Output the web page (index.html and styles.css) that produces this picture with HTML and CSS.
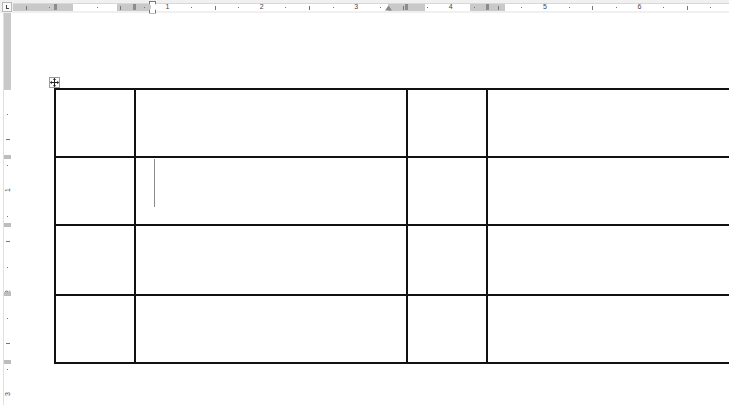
FILE: index.html
```html
<!DOCTYPE html>
<html lang="en">
  <head>
    <meta charset="UTF-8" />
    <meta name="viewport" content="width=device-width, initial-scale=1.0" />
    <title>Document</title>
    <link rel="stylesheet" href="styles.css">
  </head>
  <body>
    <!-- Horizontal ruler -->
    <div class="topbar">
      <div class="tab-selector"><span class="tab-l"></span></div>
      <div class="hruler" id="hruler">
        <div class="seg gray m-left"><span class="mark"></span></div>
        <div class="seg w-1"></div>
        <div class="seg gray g-1"><span class="mark"></span></div>
        <div class="seg w-2"></div>
        <div class="seg gray g-2"><span class="mark"></span></div>
        <div class="seg w-3"></div>
        <div class="seg gray g-3"><span class="mark"></span></div>
        <div class="seg w-4"></div>
        <div class="indent-marker"></div>
        <div class="tri-marker"></div>
      </div>
    </div>

    <div class="main">
      <!-- Vertical ruler -->
      <div class="vruler" id="vruler">
        <div class="vseg gray m-top"></div>
        <div class="vseg rest"></div>
      </div>

      <!-- Page -->
      <div class="page">
        <div class="table-wrap">
          <div class="move-handle">
            <svg width="9" height="9" viewBox="0 0 9 9">
              <path d="M4.5 0.5v8M0.5 4.5h8" stroke="#222" stroke-width="1" fill="none" />
              <path d="M4.5 0 L2.8 1.8 H6.2 Z M4.5 9 L2.8 7.2 H6.2 Z M0 4.5 L1.8 2.8 V6.2 Z M9 4.5 L7.2 2.8 V6.2 Z" fill="#222" />
            </svg>
          </div>
          <table class="doc-table">
            <colgroup>
              <col class="c1" /><col class="c2" /><col class="c3" /><col class="c4" />
            </colgroup>
            <tr class="r1"><td></td><td></td><td></td><td></td></tr>
            <tr class="r2"><td></td><td><span class="caret"></span></td><td></td><td></td></tr>
            <tr class="r3"><td></td><td></td><td></td><td></td></tr>
            <tr class="r4"><td></td><td></td><td></td><td></td></tr>
          </table>
        </div>
      </div>
    </div>

    <script>
      // horizontal ruler ticks, zero at the left margin
      const hruler = document.getElementById("hruler");
      const hZero = 60;
      const hStep = 23.6;
      for (let k = -2; k <= 27; k++) {
        if (k === 0) continue;
        const x = hZero + k * hStep;
        const el = document.createElement("span");
        if (k % 4 === 0) {
          el.className = "num";
          el.textContent = k / 4;
        } else if (Math.abs(k % 4) === 2) {
          el.className = "half";
        } else {
          el.className = "dot";
        }
        el.style.left = x + "px";
        hruler.appendChild(el);
      }

      // vertical ruler ticks
      const vruler = document.getElementById("vruler");
      const vZero = 75;
      const vStep = 25.5;
      for (let k = 1; k <= 12; k++) {
        const y = vZero + k * vStep;
        const el = document.createElement("span");
        if (k % 4 === 0) {
          el.className = "vnum";
          el.textContent = k / 4;
        } else if (k % 4 === 2) {
          el.className = "vhalf";
        } else {
          el.className = "vdot";
        }
        el.style.top = y + "px";
        vruler.appendChild(el);
      }

      // row boundary markers on the vertical ruler
      for (const y of [142, 210, 279, 347]) {
        const m = document.createElement("span");
        m.className = "vmark";
        m.style.top = y + "px";
        vruler.appendChild(m);
      }
    </script>
  </body>
</html>
```

FILE: styles.css
```css
* {
  box-sizing: border-box;
  margin: 0;
  padding: 0;
}
html,
body {
  width: 729px;
  height: 405px;
  overflow: hidden;
  background: #fff;
  font-family: "Liberation Sans", Arial, sans-serif;
}
.topbar {
  display: flex;
  align-items: center;
  height: 13px;
  background: #f0f0f0;
  padding-left: 2px;
}
.tab-selector {
  width: 10px;
  height: 10px;
  border: 1px solid #b8b8b8;
  background: #fafafa;
  margin-right: 1px;
  position: relative;
}
.tab-l {
  position: absolute;
  left: 3px;
  top: 2px;
  width: 3px;
  height: 4px;
  border-left: 1px solid #444;
  border-bottom: 1px solid #444;
}
.hruler {
  position: relative;
  display: flex;
  flex: 1;
  height: 8px;
  border-top: 1px solid #d8d8d8;
}
.seg {
  height: 100%;
  background: #fff;
}
.seg.gray {
  background: #c9c9c9;
  display: flex;
  justify-content: center;
  align-items: center;
}
.mark {
  width: 3px;
  height: 6px;
  background: #8c8c8c;
}
.m-left {
  width: 60px;
}
.seg.m-left {
  justify-content: flex-end;
  padding-right: 16px;
}
.w-1 {
  width: 44px;
}
.g-1 {
  width: 34px;
}
.w-2 {
  width: 237px;
}
.g-2 {
  width: 37px;
}
.w-3 {
  width: 45px;
}
.g-3 {
  width: 35px;
}
.w-4 {
  flex: 1;
}
.num {
  position: absolute;
  top: -1px;
  font-size: 7px;
  line-height: 8px;
  color: #444;
  transform: translateX(-50%);
}
.half {
  position: absolute;
  top: 2px;
  width: 1px;
  height: 4px;
  background: #777;
}
.dot {
  position: absolute;
  top: 3px;
  width: 1px;
  height: 1px;
  background: #777;
}
.indent-marker {
  position: absolute;
  left: 136px;
  top: -3px;
  width: 7px;
  height: 13px;
  border: 1px solid #777;
  background: #fff;
  clip-path: polygon(0 0, 100% 0, 100% 25%, 50% 50%, 100% 75%, 100% 100%, 0 100%, 0 75%, 50% 50%, 0 25%);
}
.tri-marker {
  position: absolute;
  left: 372px;
  top: 2px;
  width: 7px;
  height: 5px;
  background: #888;
  clip-path: polygon(50% 0, 100% 100%, 0 100%);
}
.main {
  display: flex;
  height: 392px;
  overflow: hidden;
}
.vruler {
  position: relative;
  display: flex;
  flex-direction: column;
  width: 8px;
  margin-left: 3px;
  margin-right: 2px;
  border-left: 1px solid #e0e0e0;
}
.vseg {
  background: #fff;
}
.vseg.gray {
  background: #c9c9c9;
}
.m-top {
  height: 77px;
}
.rest {
  flex: 1;
}
.vnum {
  position: absolute;
  left: 0;
  width: 7px;
  font-size: 7px;
  line-height: 7px;
  text-align: center;
  color: #444;
  transform: translateY(-50%) rotate(-90deg);
}
.vhalf {
  position: absolute;
  left: 2px;
  width: 4px;
  height: 1px;
  background: #777;
}
.vdot {
  position: absolute;
  left: 3px;
  width: 1px;
  height: 1px;
  background: #777;
}
.vmark {
  position: absolute;
  left: 0;
  width: 7px;
  height: 4px;
  background: #bdbdbd;
}
.page {
  flex: 1;
  padding: 75px 0 0 41px;
  overflow: hidden;
}
.table-wrap {
  position: relative;
}
.move-handle {
  position: absolute;
  left: -5px;
  top: -11px;
  width: 11px;
  height: 11px;
  border: 1px solid #9a9a9a;
  background: #fff;
  display: flex;
  align-items: center;
  justify-content: center;
}
.doc-table {
  border-collapse: collapse;
  table-layout: fixed;
  width: 780px;
}
.doc-table td {
  border: 2px solid #111;
  padding: 0;
  vertical-align: top;
}
.c1 {
  width: 80px;
}
.c2 {
  width: 272px;
}
.c3 {
  width: 80px;
}
.c4 {
  width: 348px;
}
.r1 {
  height: 68px;
}
.r2 {
  height: 68px;
}
.r3 {
  height: 70px;
}
.r4 {
  height: 68px;
}
.caret {
  display: block;
  width: 1px;
  height: 48px;
  margin: 1px 0 0 18px;
  background: #8a8a8a;
}
```
